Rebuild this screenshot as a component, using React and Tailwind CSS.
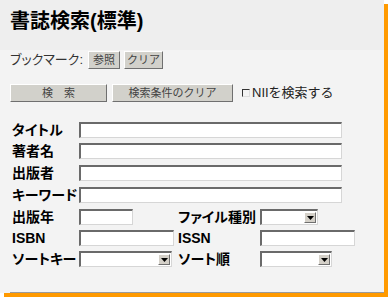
const font = "font-['Liberation_Sans','Noto_Sans_CJK_JP',sans-serif]";

function Btn({ w, children }) {
  return (
    <button
      className={`${w} h-[18px] bg-[#d2d1cb] border border-t-white border-l-white border-b-[#6f6f6f] border-r-[#6f6f6f] text-[11px] text-[#444] leading-none flex items-center justify-center`}
    >
      {children}
    </button>
  );
}

function Field({ w }) {
  return (
    <div className={`${w} h-[16px] bg-white border-t-2 border-l-2 border-t-[#6a6a6a] border-l-[#6a6a6a] border-b border-r border-b-[#d6d6d6] border-r-[#d6d6d6]`} />
  );
}

function Select({ w }) {
  return (
    <div className={`${w} h-[16px] bg-white border-t-2 border-l-2 border-t-[#6a6a6a] border-l-[#6a6a6a] border-b border-r border-b-[#d6d6d6] border-r-[#d6d6d6] flex justify-end items-center pr-px`}>
      <div className="w-[12px] h-[11px] bg-[#d4d0c8] border border-t-white border-l-white border-b-[#6f6f6f] border-r-[#6f6f6f] flex items-center justify-center">
        <svg width="7" height="4" viewBox="0 0 7 4">
          <path d="M0 0h7L3.5 4z" fill="#000" />
        </svg>
      </div>
    </div>
  );
}

function Label({ w, children }) {
  return (
    <span className={`${w} shrink-0 text-[14px] font-bold text-black leading-none [font-feature-settings:'palt']`}>
      {children}
    </span>
  );
}

export default function App() {
  return (
    <div className={`w-[388px] h-[298px] bg-white ${font}`}>
      <div className="w-[384px] h-[293px] bg-[#f3f3f3] shadow-[4px_4px_0_#ff9a00] flex flex-col">
        <div className="h-[50px] bg-[#eeeeee] pl-[10px] pt-[9px]">
          <h1 className="text-[20px] font-bold leading-[24px] text-black">書誌検索(標準)</h1>
        </div>

        <div className="mt-[1px] h-[18px] pl-[10px] flex items-center">
          <span className="text-[13px] text-[#333] w-[78px] [font-feature-settings:'palt']">ブックマーク:</span>
          <Btn w="w-[32px]">参照</Btn>
          <span className="w-[4px]" />
          <Btn w="w-[39px]">クリア</Btn>
        </div>

        <div className="mt-[15px] h-[18px] pl-[10px] flex items-center">
          <Btn w="w-[97px]">検　索</Btn>
          <span className="w-[5px]" />
          <Btn w="w-[121px]">検索条件のクリア</Btn>
          <span className="ml-[9px] w-[8px] h-[8px] border-t border-l border-[#333] border-b-[#ddd] border-r-[#ddd] border-b border-r" />
          <span className="ml-[2px] text-[13px] text-[#222]">NIIを検索する</span>
        </div>

        <div className="pl-[12px] flex flex-col">
          <div className="mt-[20px] flex items-center">
            <Label w="w-[67px]">タイトル</Label>
            <Field w="w-[263px]" />
          </div>
          <div className="mt-[5px] flex items-center">
            <Label w="w-[67px]">著者名</Label>
            <Field w="w-[263px]" />
          </div>
          <div className="mt-[6px] flex items-center">
            <Label w="w-[67px]">出版者</Label>
            <Field w="w-[263px]" />
          </div>
          <div className="mt-[6px] flex items-center">
            <Label w="w-[67px]">キーワード</Label>
            <Field w="w-[263px]" />
          </div>
          <div className="mt-[6px] flex items-center">
            <Label w="w-[67px]">出版年</Label>
            <div className="w-[99px]"><Field w="w-[54px]" /></div>
            <Label w="w-[82px]">ファイル種別</Label>
            <Select w="w-[58px]" />
          </div>
          <div className="mt-[5px] flex items-center">
            <Label w="w-[67px]">ISBN</Label>
            <div className="w-[99px]"><Field w="w-[95px]" /></div>
            <Label w="w-[82px]">ISSN</Label>
            <Field w="w-[95px]" />
          </div>
          <div className="mt-[5px] flex items-center">
            <Label w="w-[67px]">ソートキー</Label>
            <div className="w-[99px]"><Select w="w-[93px]" /></div>
            <Label w="w-[82px]">ソート順</Label>
            <Select w="w-[72px]" />
          </div>
        </div>

        <div className="mt-auto ml-[10px] h-px bg-[#9a9a9a]" />
      </div>
    </div>
  );
}
